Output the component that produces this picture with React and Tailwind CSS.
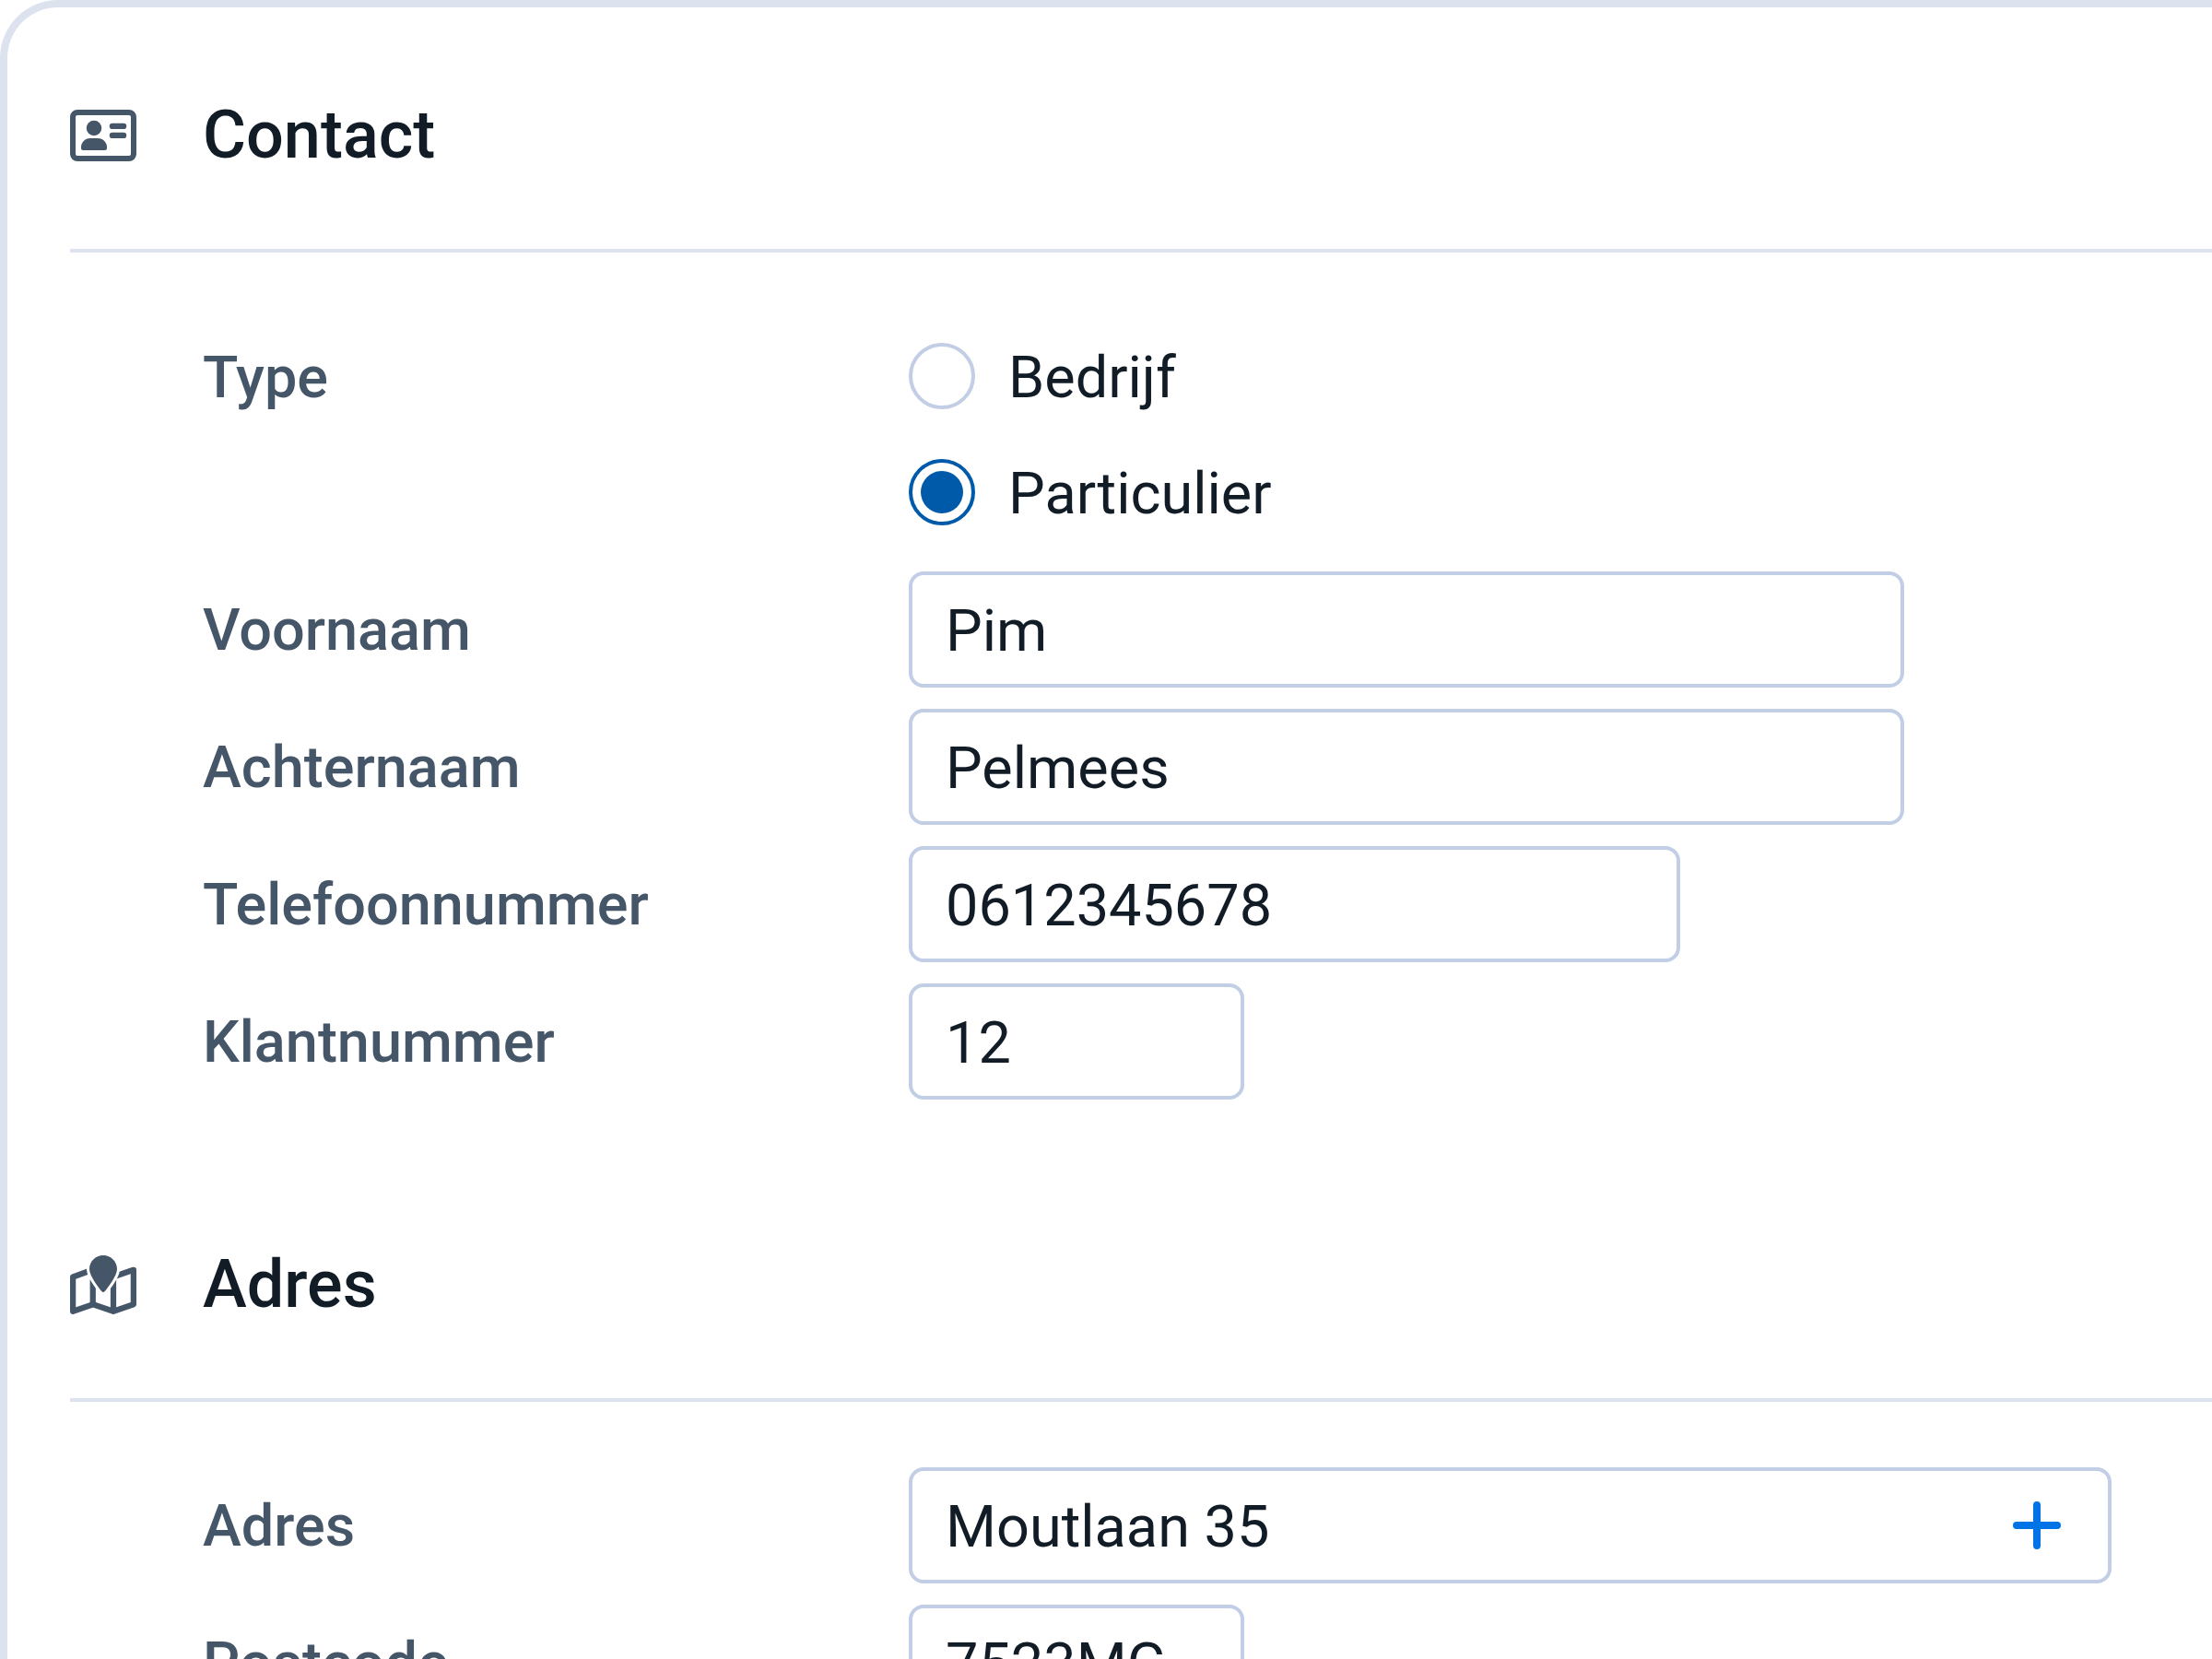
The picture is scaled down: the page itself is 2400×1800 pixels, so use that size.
import React, { useState } from 'react';

const WIDTHS = {
  sm: 'w-[364px]',
  md: 'w-[837px]',
  lg: 'w-[1080px]',
  xl: 'w-[1305px]',
};

const TYPES = [
  { value: 'company', label: 'Bedrijf' },
  { value: 'private', label: 'Particulier' },
];

function ContactIcon() {
  return (
    <svg viewBox="0 0 576 512" className="w-[72px] h-16 shrink-0" fill="currentColor" aria-hidden="true">
      <path fillRule="evenodd" d="M64 32H512a64 64 0 0 1 64 64V416a64 64 0 0 1-64 64H64a64 64 0 0 1-64-64V96a64 64 0 0 1 64-64ZM64 80a16 16 0 0 0-16 16V416a16 16 0 0 0 16 16H512a16 16 0 0 0 16-16V96a16 16 0 0 0-16-16Z" />
      <circle cx="208" cy="192" r="66" />
      <path d="M176 280h64a80 80 0 0 1 80 88 16 16 0 0 1-16 16H112a16 16 0 0 1-16-16 80 80 0 0 1 80-88Z" />
      <rect x="342" y="150" width="148" height="50" rx="25" />
      <rect x="342" y="230" width="148" height="50" rx="25" />
    </svg>
  );
}

function MapIcon() {
  return (
    <svg viewBox="0 0 576 512" className="w-[72px] h-16 shrink-0" fill="currentColor" aria-hidden="true">
      <g fill="none" stroke="currentColor" strokeWidth="50" strokeLinejoin="round">
        <path d="M200 124L25 188V486L200 426L376 486L551 426V126L360 192" />
        <path d="M198 210V426M376 210V486" />
      </g>
      <path
        className="stroke-white"
        strokeWidth="48"
        paintOrder="stroke"
        d="M408 120c0 54.600-73.100 151.900-105.200 192-7.700 9.600-22 9.600-29.600 0C241.100 271.900 168 174.600 168 120 168 53.700 221.700 0 288 0s120 53.700 120 120Z"
      />
    </svg>
  );
}

function Section({ icon, title, children }) {
  return (
    <section>
      <div className="flex items-center gap-[72px] pb-[69px] border-b-4 border-[#dce2ee]">
        <span className="text-[#465669]">{icon}</span>
        <h2 className="text-[72px] leading-[108px] font-medium text-[#121c26]">{title}</h2>
      </div>
      <div className="flex flex-col gap-[23px] pt-[71px] pl-36">{children}</div>
    </section>
  );
}

function Field({ id, label, value, width, onChange, action }) {
  return (
    <div className="flex items-center">
      <label htmlFor={id} className="w-[766px] pt-0.5 shrink-0 font-medium text-[#465669]">{label}</label>
      <div className={`flex items-center h-[126px] rounded-2xl border-4 border-[#c1cee5] ${WIDTHS[width]}`}>
        <input
          id={id}
          type="text"
          value={value}
          onChange={e => onChange(id, e.target.value)}
          className="flex-1 min-w-0 h-full pt-0.5 px-9 bg-transparent text-[#121c26] outline-none"
        />
        {action}
      </div>
    </div>
  );
}

export default function App() {
  const [type, setType] = useState('private');
  const [values, setValues] = useState({
    firstName: 'Pim',
    lastName: 'Pelmees',
    phone: '0612345678',
    customerNumber: '12',
    address: 'Moutlaan 35',
    postcode: '7523MG',
  });

  const handleChange = (id, value) => {
    setValues(prev => ({ ...prev, [id]: value }));
  };

  return (
    <div className="h-screen overflow-hidden bg-white font-['Roboto',sans-serif] text-[63px] leading-[90px]">
      <main className="flex flex-col gap-[147px] min-h-full pt-[85px] pl-[68px] border-t-8 border-l-8 border-[#dce2ee] rounded-tl-[63px] bg-white">
        <Section icon={<ContactIcon />} title="Contact">
          <fieldset className="flex">
            <legend className="float-left w-[766px] pt-0.5 leading-[126px] shrink-0 font-medium text-[#465669]">Type</legend>
            <div className="flex flex-col">
              {TYPES.map(t => (
                <label key={t.value} className="flex items-center gap-9 h-[126px] text-[#121c26]">
                  <input
                    type="radio"
                    name="type"
                    value={t.value}
                    checked={type === t.value}
                    onChange={() => setType(t.value)}
                    className="appearance-none grid place-content-center size-[72px] shrink-0 rounded-full border-4 border-[#c1cee5] checked:border-[#005aaa] before:size-[46px] before:rounded-full checked:before:bg-[#005aaa]"
                  />
                  <span className="pt-1">{t.label}</span>
                </label>
              ))}
            </div>
          </fieldset>
          <Field id="firstName" label="Voornaam" width="lg" value={values.firstName} onChange={handleChange} />
          <Field id="lastName" label="Achternaam" width="lg" value={values.lastName} onChange={handleChange} />
          <Field id="phone" label="Telefoonnummer" width="md" value={values.phone} onChange={handleChange} />
          <Field id="customerNumber" label="Klantnummer" width="sm" value={values.customerNumber} onChange={handleChange} />
        </Section>

        <Section icon={<MapIcon />} title="Adres">
          <Field
            id="address"
            label="Adres"
            width="xl"
            value={values.address}
            onChange={handleChange}
            action={
              <button type="button" aria-label="Adres toevoegen" className="flex items-center justify-center w-[154px] h-full text-[#0073e6]">
                <svg viewBox="0 0 52 52" className="size-[52px]" fill="none" stroke="currentColor" strokeWidth="8" strokeLinecap="round">
                  <path d="M26 4V48M4 26H48" />
                </svg>
              </button>
            }
          />
          <Field id="postcode" label="Postcode" width="sm" value={values.postcode} onChange={handleChange} />
        </Section>
      </main>
    </div>
  );
}
